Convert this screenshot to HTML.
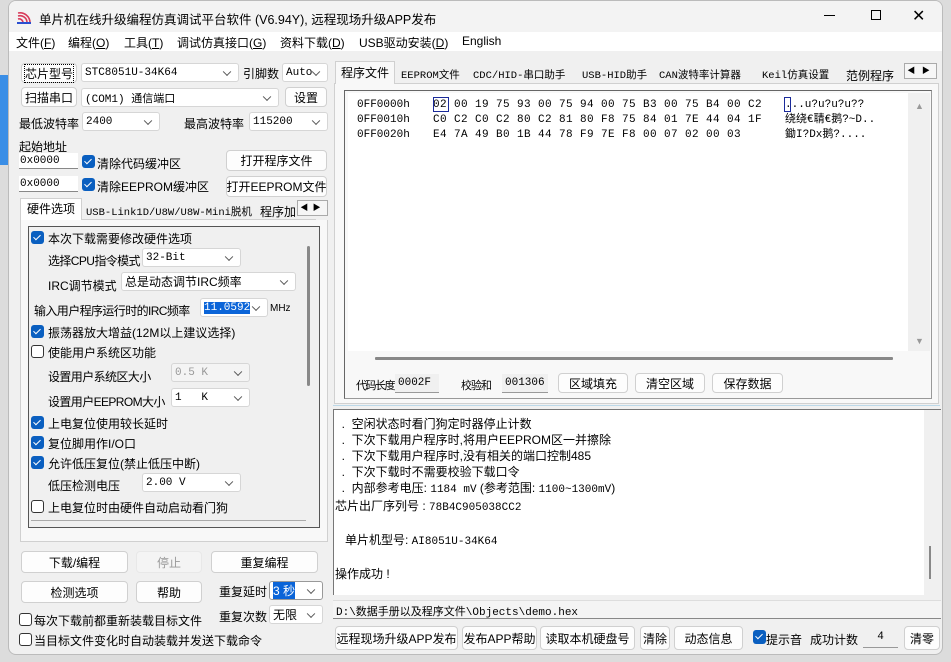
<!DOCTYPE html>
<html><head><meta charset="utf-8">
<style>
*{box-sizing:border-box;margin:0;padding:0}
body{width:951px;height:662px;overflow:hidden;background:#dcdcdc;font-family:"Liberation Sans","Noto Sans CJK SC",sans-serif;font-size:12px;color:#000;position:relative}
.a{position:absolute;white-space:nowrap}
.win{position:absolute;left:8px;top:0;width:935px;height:655px;background:#f0f0f0;border:1px solid #bbb;border-radius:8px;overflow:hidden}
.btn{position:absolute;background:#fdfdfd;border:1px solid #d0d0d0;border-radius:4px;text-align:center;font-size:12px;white-space:nowrap;display:flex;align-items:center;justify-content:center}
.cmb{position:absolute;background:#fff;border:1px solid #d6d6d6;border-radius:3px;font-family:"Liberation Mono","Noto Sans CJK SC",monospace;font-size:11px;padding-left:3px;display:flex;align-items:center;white-space:nowrap}
.cmb:after{content:"";position:absolute;right:8px;top:50%;width:5px;height:5px;border-right:1px solid #555;border-bottom:1px solid #555;transform:translateY(-70%) rotate(45deg)}
.cb{position:absolute;width:13px;height:13px;border-radius:3px;background:#0a5fc0}
.cb:after{content:"";position:absolute;left:4px;top:2px;width:3px;height:6px;border-right:1.5px solid #fff;border-bottom:1.5px solid #fff;transform:rotate(45deg)}
.cbo{position:absolute;width:13px;height:13px;border-radius:3px;border:1px solid #333;background:#fff}
.mono{font-family:"Liberation Mono","Noto Sans CJK SC",monospace;font-size:11px}
.fld{position:absolute;background:#f0f0f0;border-bottom:1px solid #999;font-family:"Liberation Mono",monospace;font-size:11px;padding-left:3px;display:flex;align-items:center}
.tight{letter-spacing:-0.6px}
</style></head><body>
<div class="a" style="left:0;top:75px;width:8px;height:90px;background:#3a8ee6"></div>
<div class="win">
 <div class="a" style="left:0;top:0;width:935px;height:31px;background:#f3f3f3"></div>
 <svg class="a" style="left:7px;top:8px" width="16" height="16" viewBox="0 0 16 16"><path d="M2 4a10 10 0 0 1 12 10M2 7a7 7 0 0 1 9 7M2 10a4 4 0 0 1 5 4" stroke="#d83a5a" stroke-width="1.6" fill="none"/><path d="M1 14h14" stroke="#2a4fd0" stroke-width="2"/></svg>
 <div class="a" style="left:30px;top:8px;font-size:12.5px">单片机在线升级编程仿真调试平台软件 (V6.94Y), 远程现场升级APP发布</div>
 <div class="a" style="left:815px;top:14px;width:11px;height:1px;background:#000"></div>
 <div class="a" style="left:862px;top:9px;width:10px;height:10px;border:1px solid #000"></div>
 <div class="a" style="left:903px;top:5px;font-size:16px">✕</div>
 <div class="a" style="left:0;top:31px;width:935px;height:19px;background:#fff"></div>
 <div class="a" style="left:7px;top:33px">文件(<u>F</u>)</div>
 <div class="a" style="left:59px;top:33px">编程(<u>O</u>)</div>
 <div class="a" style="left:115px;top:33px">工具(<u>T</u>)</div>
 <div class="a" style="left:168px;top:33px">调试仿真接口(<u>G</u>)</div>
 <div class="a" style="left:271px;top:33px">资料下载(<u>D</u>)</div>
 <div class="a" style="left:350px;top:33px">USB驱动安装(<u>D</u>)</div>
 <div class="a" style="left:453px;top:33px">English</div>

 <div class="btn" style="left:12px;top:62px;width:56px;height:20px"><span style="outline:1px dotted #000">芯片型号</span></div>
 <div class="cmb" style="left:72px;top:62px;width:158px;height:19px">STC8051U-34K64</div>
 <div class="a" style="left:234px;top:64px">引脚数</div>
 <div class="cmb" style="left:273px;top:62px;width:46px;height:19px">Auto</div>
 <div class="btn" style="left:12px;top:86px;width:56px;height:20px">扫描串口</div>
 <div class="cmb" style="left:72px;top:87px;width:198px;height:19px">(COM1) 通信端口</div>
 <div class="btn" style="left:276px;top:86px;width:42px;height:20px">设置</div>
 <div class="a" style="left:10px;top:114px">最低波特率</div>
 <div class="cmb" style="left:73px;top:111px;width:78px;height:19px">2400</div>
 <div class="a" style="left:175px;top:114px">最高波特率</div>
 <div class="cmb" style="left:240px;top:111px;width:79px;height:19px">115200</div>
 <div class="a" style="left:10px;top:137px">起始地址</div>
 <div class="a mono" style="left:10px;top:152px;width:59px;height:16px;background:#fff;border-bottom:1px solid #888;padding-left:1px;line-height:16px">0x0000</div>
 <div class="cb" style="left:73px;top:154px"></div>
 <div class="a" style="left:88px;top:154px">清除代码缓冲区</div>
 <div class="btn" style="left:217px;top:149px;width:101px;height:21px">打开程序文件</div>
 <div class="a mono" style="left:10px;top:175px;width:59px;height:16px;background:#fff;border-bottom:1px solid #888;padding-left:1px;line-height:16px">0x0000</div>
 <div class="cb" style="left:73px;top:177px"></div>
 <div class="a" style="left:88px;top:177px">清除EEPROM缓冲区</div>
 <div class="btn" style="left:217px;top:175px;width:101px;height:21px">打开EEPROM文件</div>
 <div class="a" style="left:11px;top:198px;width:296px;height:21px;border-bottom:1px solid #d0d0d0"></div>
 <div class="a" style="left:11px;top:197px;width:62px;height:22px;background:#fff;border:1px solid #d0d0d0;border-bottom:none;text-align:center;line-height:20px">硬件选项</div>
 <div class="a" style="left:77px;top:203px;font-family:'Liberation Mono','Noto Sans CJK SC',monospace;font-size:10.5px">USB-Link1D/U8W/U8W-Mini脱机</div>
 <div class="a" style="left:251px;top:202px;width:36px;overflow:hidden">程序加载</div>
 <div class="a" style="left:288px;top:199px;width:31px;height:16px;border:1px solid #aaa;background:#f6f6f6;font-size:8px;line-height:14px">&nbsp;◀&nbsp;&nbsp;▶</div>
 <div class="a" style="left:11px;top:219px;width:308px;height:322px;background:#f8f8f8;border:1px solid #d0d0d0;border-top:none"></div>
 <div class="a" style="left:19px;top:225px;width:292px;height:302px;border:1px solid #555;background:#f0f0f0"></div>
 <div class="a" style="left:298px;top:245px;width:3px;height:140px;background:#888;border-radius:2px"></div>
 <div class="a" style="left:22px;top:519px;width:275px;height:1px;background:#aaa"></div>
 <div class="cb" style="left:22px;top:230px"></div><div class="a" style="left:39px;top:229px">本次下载需要修改硬件选项</div>
 <div class="a tight" style="left:39px;top:251px">选择CPU指令模式</div>
 <div class="cmb" style="left:133px;top:247px;width:99px;height:19px">32-Bit</div>
 <div class="a" style="left:39px;top:276px">IRC调节模式</div>
 <div class="cmb" style="left:112px;top:271px;width:175px;height:19px;font-family:'Liberation Sans','Noto Sans CJK SC',sans-serif;font-size:12px">总是动态调节IRC频率</div>
 <div class="a tight" style="left:25px;top:301px">输入用户程序运行时的IRC频率</div>
 <div class="cmb" style="left:191px;top:297px;width:68px;height:19px"><span style="background:#0a64d8;color:#fff">11.0592</span></div>
 <div class="a" style="left:261px;top:302px;font-size:10px">MHz</div>
 <div class="cb" style="left:22px;top:324px"></div><div class="a" style="left:39px;top:323px">振荡器放大增益(12M以上建议选择)</div>
 <div class="cbo" style="left:22px;top:344px"></div><div class="a" style="left:39px;top:343px">使能用户系统区功能</div>
 <div class="a tight" style="left:39px;top:367px">设置用户系统区大小</div>
 <div class="cmb" style="left:162px;top:362px;width:79px;height:19px;color:#999;background:#f4f4f4">0.5 K</div>
 <div class="a tight" style="left:39px;top:392px">设置用户EEPROM大小</div>
 <div class="cmb" style="left:162px;top:387px;width:79px;height:19px">1 &nbsp;&nbsp;K</div>
 <div class="cb" style="left:22px;top:415px"></div><div class="a" style="left:39px;top:414px">上电复位使用较长延时</div>
 <div class="cb" style="left:22px;top:435px"></div><div class="a" style="left:39px;top:434px">复位脚用作I/O口</div>
 <div class="cb" style="left:22px;top:455px"></div><div class="a" style="left:39px;top:454px">允许低压复位(禁止低压中断)</div>
 <div class="a" style="left:39px;top:476px">低压检测电压</div>
 <div class="cmb" style="left:133px;top:472px;width:99px;height:19px">2.00 V</div>
 <div class="cbo" style="left:22px;top:499px"></div><div class="a" style="left:39px;top:498px">上电复位时由硬件自动启动看门狗</div>
 <div class="btn" style="left:12px;top:550px;width:107px;height:22px">下载/编程</div>
 <div class="btn" style="left:127px;top:550px;width:66px;height:22px;background:#f4f4f4;color:#999;border-color:#e8e8e8">停止</div>
 <div class="btn" style="left:202px;top:550px;width:107px;height:22px">重复编程</div>
 <div class="btn" style="left:12px;top:580px;width:107px;height:22px">检测选项</div>
 <div class="btn" style="left:127px;top:580px;width:66px;height:22px">帮助</div>
 <div class="a" style="left:210px;top:582px">重复延时</div>
 <div class="cmb" style="left:260px;top:580px;width:54px;height:19px;border-color:#999"><span style="background:#0a64d8;color:#fff;font-family:'Liberation Sans','Noto Sans CJK SC',sans-serif;font-size:12px">3 秒</span></div>
 <div class="a" style="left:210px;top:607px">重复次数</div>
 <div class="cmb" style="left:260px;top:604px;width:54px;height:19px;font-family:'Liberation Sans','Noto Sans CJK SC',sans-serif;font-size:12px">无限</div>
 <div class="cbo" style="left:10px;top:612px"></div><div class="a" style="left:25px;top:611px">每次下载前都重新装载目标文件</div>
 <div class="cbo" style="left:10px;top:632px"></div><div class="a" style="left:25px;top:631px">当目标文件变化时自动装载并发送下载命令</div>

 <div class="a" style="left:325px;top:82px;width:605px;height:1px;background:#d0d0d0"></div>
 <div class="a" style="left:326px;top:60px;width:60px;height:23px;background:#f8f8f8;border:1px solid #d0d0d0;border-bottom:none;text-align:center;line-height:22px">程序文件</div>
 <div class="a mono" style="left:392px;top:66px;font-size:10.5px">EEPROM文件</div>
 <div class="a mono" style="left:464px;top:66px;font-size:10.5px">CDC/HID-串口助手</div>
 <div class="a mono" style="left:573px;top:66px;font-size:10.5px">USB-HID助手</div>
 <div class="a mono" style="left:650px;top:66px;font-size:10.5px">CAN波特率计算器</div>
 <div class="a mono" style="left:753px;top:66px;font-size:10.5px">Keil仿真设置</div>
 <div class="a" style="left:837px;top:66px">范例程序</div>
 <div class="a" style="left:895px;top:62px;width:33px;height:16px;border:1px solid #aaa;background:#f6f6f6;font-size:8px;line-height:14px">&nbsp;◀&nbsp;&nbsp;&nbsp;▶</div>
 <div class="a" style="left:325px;top:83px;width:605px;height:320px;background:#f8f8f8;border:1px solid #d0d0d0;border-top:none"></div>
 <div class="a" style="left:335px;top:89px;width:588px;height:309px;border:1px solid #666;border-right-color:#999;border-bottom-color:#999"></div>
 <div class="a" style="left:339px;top:92px;width:560px;height:258px;background:#fff"></div>
 <div class="a" style="left:899px;top:92px;width:22px;height:258px;background:#f0f0f0"></div>
 <div class="a" style="left:906px;top:100px;font-size:9px;color:#999">▲</div>
 <div class="a" style="left:906px;top:335px;font-size:9px;color:#999">▼</div>
 <div class="a" style="left:366px;top:356px;width:518px;height:3px;background:#888;border-radius:1px"></div>
 <div class="a mono" style="left:348px;top:97px;line-height:15px">0FF0000h<br>0FF0010h<br>0FF0020h</div>
 <div class="a mono" style="left:424px;top:97px;line-height:15px;letter-spacing:0.4px">02 00 19 75 93 00 75 94 00 75 B3 00 75 B4 00 C2<br>C0 C2 C0 C2 80 C2 81 80 F8 75 84 01 7E 44 04 1F<br>E4 7A 49 B0 1B 44 78 F9 7E F8 00 07 02 00 03</div>
 <div class="a" style="left:424px;top:96px;width:16px;height:15px;border:1px solid #1a2a9a"></div>
 <div class="a" style="left:775px;top:96px;width:7px;height:15px;border:1px solid #1a2a9a"></div>
 <div class="a mono" style="left:776px;top:97px;line-height:15px">...u?u?u?u??<br>绕绕€聙€鹅?~D..<br>鋤I?Dx鹅?....</div>
 <div class="a" style="left:347px;top:376px;font-size:11px;letter-spacing:-1.5px">代码长度</div>
 <div class="fld" style="left:386px;top:373px;width:44px;height:19px">0002F</div>
 <div class="a" style="left:452px;top:376px;font-size:11px;letter-spacing:-1px">校验和</div>
 <div class="fld" style="left:493px;top:373px;width:46px;height:19px">001306</div>
 <div class="btn" style="left:549px;top:372px;width:70px;height:20px">区域填充</div>
 <div class="btn" style="left:626px;top:372px;width:70px;height:20px">清空区域</div>
 <div class="btn" style="left:703px;top:372px;width:71px;height:20px">保存数据</div>
 <div class="a" style="left:324px;top:404px;width:607px;height:1px;background:#bcd8e8"></div>
 <div class="a" style="left:324px;top:408px;width:608px;height:186px;background:#fff;border-top:1px solid #777;border-left:1px solid #777"></div>
 <div class="a" style="left:915px;top:409px;width:17px;height:185px;background:#f0f0f0"></div>
 <div class="a" style="left:920px;top:545px;width:2px;height:33px;background:#888"></div>
 <div class="a" style="left:326px;top:415px;line-height:16px;font-size:12px">
 &nbsp;&nbsp;.&nbsp; 空闲状态时看门狗定时器停止计数<br>
 &nbsp;&nbsp;.&nbsp; 下次下载用户程序时,将用户EEPROM区一并擦除<br>
 &nbsp;&nbsp;.&nbsp; 下次下载用户程序时,没有相关的端口控制485<br>
 &nbsp;&nbsp;.&nbsp; 下次下载时不需要校验下载口令<br>
 &nbsp;&nbsp;.&nbsp; 内部参考电压: <span class="mono">1184 mV</span> (参考范围: <span class="mono">1100~1300mV</span>)<br>
 芯片出厂序列号 : <span class="mono">78B4C905038CC2</span><br><br>
 &nbsp;&nbsp;&nbsp;单片机型号: <span class="mono">AI8051U-34K64</span><br><br>
 操作成功 !</div>
 <div class="a" style="left:324px;top:599px;width:608px;height:19px;background:#f4f4f4;border-top:1px solid #ddd;border-bottom:1px solid #888"></div>
 <div class="a mono" style="left:327px;top:602px">D:\数据手册以及程序文件\Objects\demo.hex</div>
 <div class="btn" style="left:326px;top:625px;width:123px;height:24px">远程现场升级APP发布</div>
 <div class="btn" style="left:453px;top:625px;width:75px;height:24px">发布APP帮助</div>
 <div class="btn" style="left:531px;top:625px;width:95px;height:24px">读取本机硬盘号</div>
 <div class="btn" style="left:631px;top:625px;width:30px;height:24px">清除</div>
 <div class="btn" style="left:665px;top:625px;width:69px;height:24px">动态信息</div>
 <div class="cb" style="left:744px;top:629px;height:14px"></div>
 <div class="a" style="left:757px;top:630px">提示音</div>
 <div class="a" style="left:801px;top:630px">成功计数</div>
 <div class="fld" style="left:854px;top:626px;width:35px;height:21px;justify-content:center;padding:0">4</div>
 <div class="btn" style="left:895px;top:625px;width:36px;height:24px">清零</div>
</div>
</body></html>
